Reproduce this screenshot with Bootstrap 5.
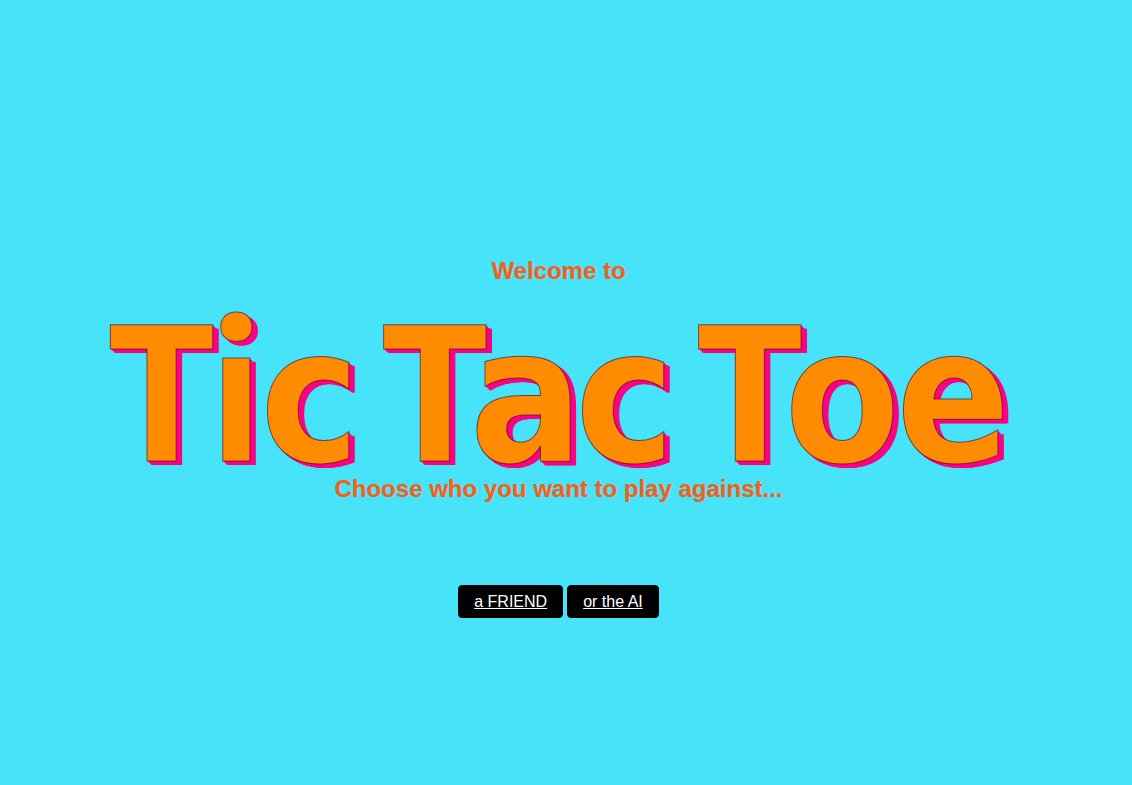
<!DOCTYPE html>
<html lang="en">
<head>
<meta charset="utf-8">
<meta name="viewport" content="width=device-width, initial-scale=1">
<title>Tic Tac Toe</title>
<link href="https://cdn.jsdelivr.net/npm/bootstrap@5.3.0/dist/css/bootstrap.min.css" rel="stylesheet">
<style>
  body { background: #46e3f9; font-family: "Liberation Sans", Arial, sans-serif; }
  .welcome { padding: 90px 15px 0 0; }
  .intro { font-size: 24px; line-height: 28px; font-weight: 700; color: #e9651a; text-shadow: 1px 0 0 #b9b8d0; }
  .game-title {
    font-family: "DejaVu Sans Condensed", "DejaVu Sans", sans-serif;
    font-size: 187px; line-height: 158px; font-weight: 700; color: #ff8c00;
    -webkit-text-stroke: 1px rgba(50, 10, 60, .65);
    text-shadow: 1px 1px 0 #ff0080, 2px 2px 0 #ff0080, 3px 3px 0 #ff0080, 4px 4px 0 #ff0080, 5px 4px 0 #ff0080, 6px 4px 0 #ff0080;
    margin-top: 32px; gap: 20px;
  }
  .letter-t { font-family: "Noto Sans", sans-serif; font-size: 190px; line-height: 1px; margin-right: -20px; }
  .letter-i { font-family: "Noto Sans CJK SC", sans-serif; font-size: 184px; line-height: 1px; margin: 0 -4px 0 12px; }
  .letter-a { margin-right: -8px; }
  .letter-o { margin-right: -4px; }
  .choices { margin-top: 82px; gap: 4px; }
  .choice { --bs-btn-padding-x: 15px; --bs-btn-padding-y: 4px; --bs-btn-line-height: 23px; --bs-btn-border-radius: 4px; --bs-btn-bg: #000; --bs-btn-border-color: #000; --bs-btn-color: #fff; }
</style>
</head>
<body>
<main class="welcome min-vh-100 d-flex flex-column align-items-center justify-content-center text-center">
  <h2 class="intro mb-0">Welcome to</h2>
  <h1 class="game-title d-flex justify-content-center text-nowrap mb-0"><span><span class="letter-t">T</span><span class="letter-i">i</span>c</span> <span><span class="letter-t">T</span><span class="letter-a">a</span>c</span> <span><span class="letter-t">T</span><span class="letter-o">o</span>e</span></h1>
  <h2 class="intro mb-0">Choose who you want to play against...</h2>
  <nav class="choices d-flex" aria-label="Opponent">
    <a class="btn choice text-decoration-underline" href="#friend">a FRIEND</a>
    <a class="btn choice text-decoration-underline" href="#ai">or the AI</a>
  </nav>
</main>
<script src="https://cdn.jsdelivr.net/npm/bootstrap@5.3.0/dist/js/bootstrap.bundle.min.js"></script>
</body>
</html>
